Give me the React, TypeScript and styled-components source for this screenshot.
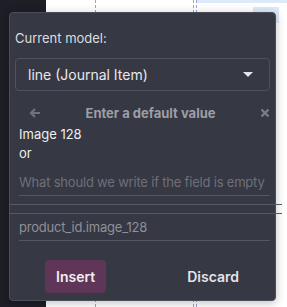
import React from 'react';
import styled, { createGlobalStyle } from 'styled-components';

const GlobalStyle = createGlobalStyle`
	html, body {
		margin: 0;
		padding: 0;
		width: 287px;
		height: 307px;
		overflow: hidden;
		font-family: Inter, "Noto Sans", sans-serif;
	}
`;

const Page = styled.div`
	position: relative;
	width: 287px;
	height: 307px;
	display: grid;
	grid-template-columns: 46px 1fr;
	background: #fff;
`;

const Sidebar = styled.div`
	background: #1d1e26;
`;

const Canvas = styled.div`
	position: relative;
	background: #fff;
`;

const TopStrip = styled.div`
	margin-left: 151px;
	height: 3px;
	background: #dce9f8;
`;

const Guide = styled.div<{ left: number }>`
	position: absolute;
	top: 0;
	bottom: 0;
	left: ${(p) => p.left}px;
	border-left: 1px dashed #9ea3c8;
`;

const Chip = styled.div`
	position: absolute;
	top: 7px;
	left: 207px;
	width: 26px;
	height: 16px;
	background: #dce9f8;
`;

const Popover = styled.div`
	position: absolute;
	top: 12px;
	left: 9px;
	width: 267px;
	height: 289px;
	box-sizing: border-box;
	background: #363843;
	border: 1px solid #4b4e59;
	border-radius: 4px;
	box-shadow: 0 2px 10px rgba(0, 0, 0, 0.25);
	padding: 17px 5px 0 5px;
	display: flex;
	flex-direction: column;
	color: #e4e4e7;
`;

const Label = styled.div`
	font-size: 13px;
	line-height: 16px;
	color: #dcdde0;
`;

const Select = styled.div`
	margin-top: 12px;
	height: 33px;
	box-sizing: border-box;
	border: 1px solid #4f525d;
	border-radius: 4px;
	display: flex;
	align-items: center;
	justify-content: space-between;
	padding: 0 16px 0 12px;
	font-size: 14px;
	color: #e8e8ea;
`;

const Caret = styled.span`
	width: 0;
	height: 0;
	border-left: 5px solid transparent;
	border-right: 5px solid transparent;
	border-top: 5px solid #e6e6e8;
`;

const Header = styled.div`
	margin-top: 12px;
	display: flex;
	align-items: center;
	justify-content: space-between;
	padding: 0 0 0 14px;
	height: 20px;
	color: #9fa1a8;
`;

const Title = styled.div`
	font-size: 13px;
	font-weight: 700;
	color: #9c9ea6;
`;

const Field = styled.div`
	padding: 0 2px 0 4px;
	font-size: 13px;
	line-height: 19px;
	color: #eeeef0;
`;

const Gap = styled.div<{ size: number }>`
	height: ${(p) => p.size}px;
	flex: none;
`;

const Input = styled.div<{ muted?: boolean }>`
	margin: 0 0 0 4px;
	font-size: 13px;
	letter-spacing: -0.2px;
	line-height: 20px;
	padding-bottom: 3px;
	border-bottom: 1px solid #555862;
	color: ${(p) => (p.muted ? '#6d707a' : '#8e909a')};
	white-space: nowrap;
	overflow: hidden;
`;

const Rule = styled.div`
	margin: 0 -12px 0 -6px;
	border-top: 1px solid #565964;
`;

const Actions = styled.div`
	margin-top: 19px;
	display: flex;
	align-items: center;
	padding-left: 30px;
	gap: 70px;
`;

const Button = styled.button<{ primary?: boolean }>`
	height: 33px;
	padding: 0 11px;
	border: none;
	border-radius: 4px;
	font-family: inherit;
	font-size: 14px;
	font-weight: 600;
	background: ${(p) => (p.primary ? '#5f3558' : 'transparent')};
	color: ${(p) => (p.primary ? '#f2eef1' : '#e4e4e7')};
`;

export default function App() {
	return (
		<>
			<GlobalStyle />
			<Page>
				<Sidebar />
				<Canvas>
					<TopStrip />
					<Guide left={49} />
					<Guide left={147} />
					<Guide left={150} />
					<Chip />
				</Canvas>
				<Popover>
					<Label>Current model:</Label>
					<Select>
						<span>line (Journal Item)</span>
						<Caret />
					</Select>
					<Header>
						<svg width="12" height="12" viewBox="0 0 12 12">
							<path d="M11 6H2M6 2L2 6l4 4" stroke="#6f727c" strokeWidth="2.2" fill="none" />
						</svg>
						<Title>Enter a default value</Title>
						<svg width="10" height="10" viewBox="0 0 10 10">
							<path d="M1.5 1.5l7 7M8.5 1.5l-7 7" stroke="#7a7d87" strokeWidth="2.4" />
						</svg>
					</Header>
					<Gap size={2} />
					<Field>Image 128</Field>
					<Field>or</Field>
					<Gap size={9} />
					<Input muted>What should we write if the field is empty</Input>
					<Gap size={8} />
					<Rule />
					<Gap size={8} />
					<Rule />
					<Gap size={3} />
					<Input>product_id.image_128</Input>
					<Actions>
						<Button primary>Insert</Button>
						<Button>Discard</Button>
					</Actions>
				</Popover>
			</Page>
		</>
	);
}
